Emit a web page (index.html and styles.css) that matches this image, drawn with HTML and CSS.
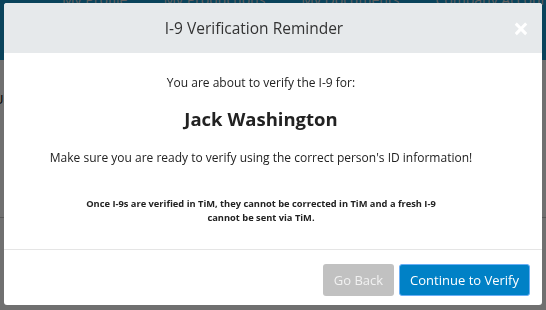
FILE: index.html
```html
<!DOCTYPE html>
<html lang="en">
<head>
  <meta charset="UTF-8">
  <meta name="viewport" content="width=device-width, initial-scale=1.0">
  <title>I-9 Verification Reminder</title>
  <link rel="stylesheet" href="styles.css">
</head>
<body>
  <div class="page">
    <nav class="top-nav">
      <span>My Profile</span>
      <span>My Productions</span>
      <span>My Documents</span>
      <span>Company Account</span>
    </nav>
    <div class="page-body">
      <div class="row">Upcoming</div>
    </div>
  </div>

  <div class="overlay">
    <div class="modal">
      <div class="modal-header">
        <h4 class="modal-title">I-9 Verification Reminder</h4>
        <span class="close">&times;</span>
      </div>
      <div class="modal-body">
        <p class="lead">You are about to verify the I-9 for:</p>
        <h3 class="name">Jack Washington</h3>
        <p class="lead">Make sure you are ready to verify using the correct person's ID information!</p>
        <p class="note">Once I-9s are verified in TiM, they cannot be corrected in TiM and a fresh I-9 cannot be sent via TiM.</p>
      </div>
      <div class="modal-footer">
        <button class="btn btn-back">Go Back</button>
        <button class="btn btn-primary">Continue to Verify</button>
      </div>
    </div>
  </div>
</body>
</html>
```
FILE: styles.css
```css
* {
  box-sizing: border-box;
}
body {
  margin: 0;
  font-family: "Open Sans", "Noto Sans", sans-serif;
  color: #222;
  background: #fff;
}
.page {
  height: 310px;
  overflow: hidden;
}
.top-nav {
  height: 60px;
  background-color: #1899cf;
  display: flex;
  gap: 36px;
  padding: 0 62px;
  color: #d8d8d8;
  font-size: 14px;
  line-height: 0;
  white-space: nowrap;
}
.page-body {
  padding: 20px 0 0;
}
.row {
  height: 138px;
  padding: 10px 0 0 0;
  margin-left: -6px;
  border-bottom: 1px solid #c8c8c8;
  font-size: 13px;
  color: #000;
}
.overlay {
  position: fixed;
  top: 0;
  left: 0;
  right: 0;
  bottom: 0;
  background-color: rgba(0, 0, 0, 0.56);
  padding: 3px 4px 0;
}
.modal {
  background: #fff;
  border-radius: 3px;
  overflow: hidden;
  height: 302px;
  display: flex;
  flex-direction: column;
}
.modal-header {
  height: 50px;
  flex: 0 0 50px;
  background-color: #e6e9eb;
  display: flex;
  align-items: center;
  justify-content: center;
  padding-right: 38px;
  position: relative;
}
.modal-title {
  margin: 0;
  font-size: 15.5px;
  font-weight: normal;
  color: #333;
}
.close {
  position: absolute;
  right: 13px;
  top: 12px;
  color: #fff;
  font-size: 28px;
  font-weight: bold;
  line-height: 26px;
}
.modal-body {
  height: 197px;
  flex: 0 0 197px;
  text-align: center;
  padding: 21px 44px 0 20px;
  border-bottom: 1px solid #e5e5e5;
}
.lead {
  margin: 0;
  font-size: 12px;
  line-height: 18px;
}
.name {
  margin: 15px 0 18px;
  font-size: 18.5px;
  font-weight: bold;
  line-height: 24px;
}
.note {
  margin: 30px auto 0;
  width: 370px;
  font-size: 9.3px;
  font-weight: bold;
  line-height: 14px;
}
.modal-footer {
  flex: 1;
  display: flex;
  justify-content: flex-end;
  align-items: center;
  gap: 5px;
  padding: 4px 12px 0 0;
}
.btn {
  font-family: inherit;
  font-size: 13px;
  height: 32px;
  border-radius: 3px;
  padding: 0 10px;
  border: 1px solid transparent;
}
.btn-back {
  background-color: #c1c1c1;
  color: #f2f2f2;
}
.btn-primary {
  background-color: #0081c6;
  color: #fff;
  border-color: #6aaef5;
}
```
